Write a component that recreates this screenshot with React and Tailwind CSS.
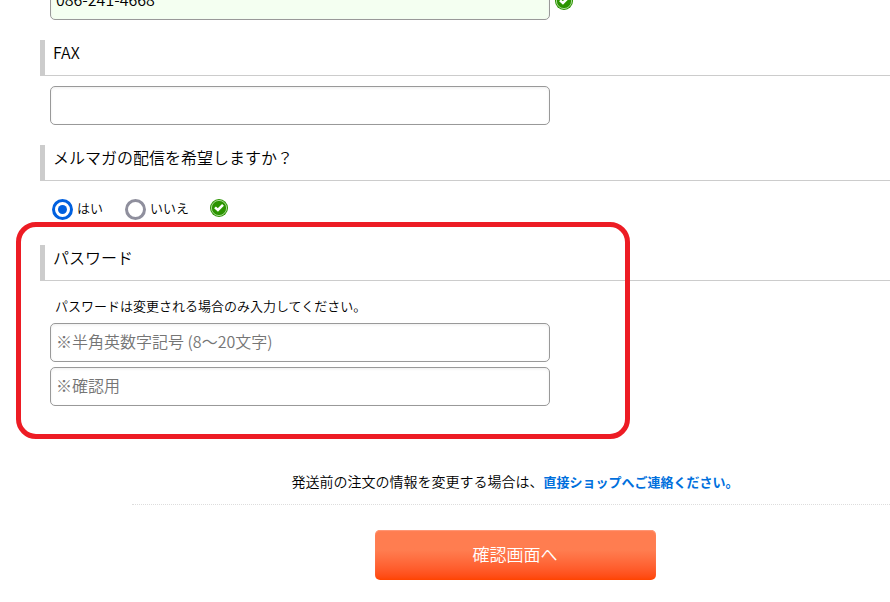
import React, { useState } from 'react'

const inputClass =
  'block h-[39px] w-full max-w-[500px] rounded-[5px] border border-[#999] px-[5px] pb-1 text-base text-black shadow-[inset_0_1px_3px_#eeeeee] outline-none placeholder:text-[#757575]'

const radioClass =
  "grid size-[21px] shrink-0 appearance-none place-items-center rounded-full border-[3px] border-[#8f8f9d] bg-white checked:border-[#0060df] checked:before:size-[9px] checked:before:rounded-full checked:before:bg-[#0060df] checked:before:content-['']"

const CheckMark = () => (
  <svg className="size-[18px] shrink-0" viewBox="0 0 18 18" role="img" aria-label="OK">
    <circle cx="9" cy="9" r="9" fill="#2b9400" />
    <circle cx="9" cy="9" r="7.6" fill="none" stroke="#b5dfa5" strokeWidth="0.9" />
    <path d="M5 8.4 L7.9 11 L13 5.8" fill="none" stroke="#fff" strokeWidth="2.6" />
  </svg>
)

const Heading = ({ id, htmlFor, children }) => (
  <h2 id={id} className="h-9 border-b border-l-[5px] border-[#ccc] pl-2 text-base leading-6">
    {htmlFor ? <label htmlFor={htmlFor}>{children}</label> : children}
  </h2>
)

const App = () => {
  const [tel, setTel] = useState('086-241-4668')
  const [fax, setFax] = useState('')
  const [magazine, setMagazine] = useState('yes')

  return (
    <main className="overflow-hidden bg-white pb-5 font-['Noto_Sans_CJK_JP',sans-serif] font-[350] text-black">
      <form className="-mt-[19px] pl-10" onSubmit={(e) => e.preventDefault()}>
        {/* Tel */}
        <div className="flex items-center gap-[5px] pl-2.5">
          <input
            type="tel"
            aria-label="TEL"
            className={`${inputClass} bg-[#f4fff1]`}
            value={tel}
            onChange={(e) => setTel(e.target.value)}
          />
          <CheckMark />
        </div>

        {/* Fax */}
        <section className="mt-5">
          <Heading htmlFor="fax">FAX</Heading>
          <div className="pt-2.5 pl-2.5">
            <input
              id="fax"
              type="tel"
              className={`${inputClass} bg-white`}
              value={fax}
              onChange={(e) => setFax(e.target.value)}
            />
          </div>
        </section>

        {/* Mail magazine */}
        <section className="mt-5">
          <Heading id="magazine">メルマガの配信を希望しますか？</Heading>
          <div role="radiogroup" aria-labelledby="magazine" className="flex pt-[18px] pl-3 text-[13px] leading-[18px]">
            <label className="mr-[22px] flex gap-1">
              <input
                type="radio"
                name="magazine"
                className={radioClass}
                checked={magazine === 'yes'}
                onChange={() => setMagazine('yes')}
              />
              はい
            </label>
            <label className="mr-[21px] flex gap-1">
              <input
                type="radio"
                name="magazine"
                className={radioClass}
                checked={magazine === 'no'}
                onChange={() => setMagazine('no')}
              />
              いいえ
            </label>
            <CheckMark />
          </div>
        </section>

        {/* Password */}
        <section className="relative mt-[25px]">
          <Heading htmlFor="password">パスワード</Heading>
          <div className="pt-[15px] pl-2.5">
            <p className="mb-[7px] pl-[5px] text-[13px] leading-5">
              パスワードは変更される場合のみ入力してください。
            </p>
            <input
              id="password"
              type="password"
              className={`${inputClass} mb-[5px] bg-white`}
              placeholder="※半角英数字記号 (8～20文字)"
            />
            <input
              type="password"
              aria-label="パスワード確認用"
              className={`${inputClass} bg-white`}
              placeholder="※確認用"
            />
          </div>
          <div className="pointer-events-none absolute -top-[23px] -bottom-[33px] -left-6 w-[614px] rounded-[20px] border-[5px] border-[#ed1c24]" />
        </section>

        {/* Submit */}
        <div className="-mr-2 mt-[65px] ml-[92px] text-center">
          <p className="border-b border-dotted border-[#ddd] pb-3 text-sm leading-5">
            発送前の注文の情報を変更する場合は、
            <a href="#contact" className="text-[13px] font-bold text-[#0070dd]">
              直接ショップへご連絡ください。
            </a>
          </p>
          <button
            type="submit"
            className="mt-[25px] h-[50px] w-full max-w-[281px] rounded-[5px] bg-linear-to-b from-[#ff7d50] from-40% to-[#ff4400] pb-[3px] text-[17px] text-white shadow-[inset_0_1px_1px_#ff9a78]"
          >
            確認画面へ
          </button>
        </div>
      </form>
    </main>
  )
}

export default App
